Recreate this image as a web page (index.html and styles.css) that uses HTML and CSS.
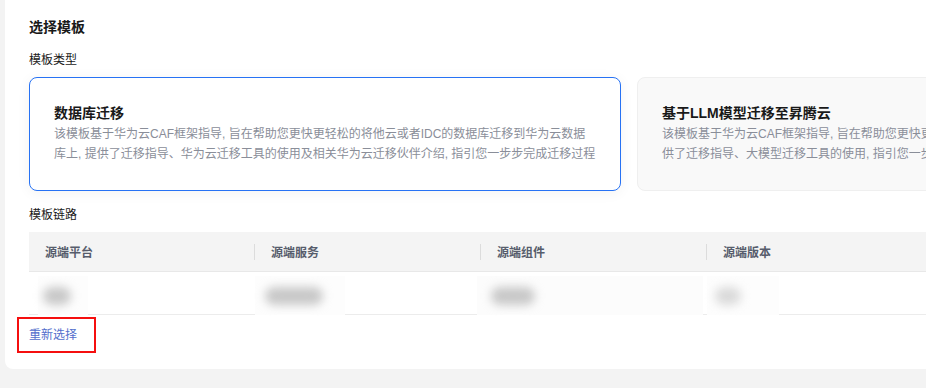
FILE: index.html
```html
<!DOCTYPE html>
<html lang="zh-CN">
<head>
<meta charset="utf-8">
<title>选择模板</title>
<link rel="stylesheet" href="styles.css">
</head>
<body>
<div class="page">
  <section class="panel">
    <h2 class="title">选择模板</h2>
    <div class="label">模板类型</div>
    <div class="cards">
      <div class="card card-active">
        <div class="card-title">数据库迁移</div>
        <div class="card-desc">该模板基于华为云CAF框架指导, 旨在帮助您更快更轻松的将他云或者IDC的数据库迁移到华为云数据<br>库上, 提供了迁移指导、华为云迁移工具的使用及相关华为云迁移伙伴介绍, 指引您一步步完成迁移过程</div>
      </div>
      <div class="card card-idle">
        <div class="card-title">基于LLM模型迁移至昇腾云</div>
        <div class="card-desc">该模板基于华为云CAF框架指导, 旨在帮助您更快更轻松的将LLM大模型迁移至昇腾云上, 提<br>供了迁移指导、大模型迁移工具的使用, 指引您一步步完成迁移过程</div>
      </div>
    </div>
    <div class="label label-chain">模板链路</div>
    <div class="table">
      <div class="thead">
        <div class="th first">源端平台</div>
        <div class="th">源端服务</div>
        <div class="th">源端组件</div>
        <div class="th">源端版本</div>
        <div class="th"></div>
      </div>
      <div class="trow">
        <div class="td"><div class="mask m1"><span class="blob b1"></span></div></div>
        <div class="td"><div class="mask m2"><span class="blob b2"></span></div></div>
        <div class="td"><div class="mask m3"><span class="blob b3"></span></div></div>
        <div class="td"><div class="mask m4"><span class="blob b4"></span></div></div>
        <div class="td"></div>
      </div>
    </div>
    <div class="actions">
      <a class="reselect" href="#">重新选择</a>
    </div>
  </section>
</div>
</body>
</html>
```

FILE: styles.css
```css
* { box-sizing: border-box; }
html, body {
  margin: 0;
  padding: 0;
  background: #f3f3f3;
  overflow: hidden;
  font-family: "Liberation Sans", "Noto Sans CJK SC", sans-serif;
  color: #191919;
}
.page {
  padding: 0 0 0 5px;
  width: 1400px;
}
.panel {
  background: #fff;
  border-radius: 0 0 8px 8px;
  padding: 16px 24px 18px 24px;
  width: 1300px;
}
.title {
  margin: 0;
  font-size: 14px;
  line-height: 22px;
  font-weight: 700;
}
.label {
  margin-top: 12px;
  font-size: 12px;
  line-height: 20px;
}
.label-chain { margin-top: 14px; }
.cards {
  display: flex;
  gap: 16px;
  margin-top: 7px;
}
.card {
  width: 592px;
  flex: none;
  border-radius: 8px;
  padding: 24px 24px 26px 24px;
  border: 1px solid #ececec;
}
.card-active {
  border-color: #2772f4;
  background: #fff;
  box-shadow: 0 2px 14px rgba(0,0,0,0.05);
}
.card-idle {
  background: #f9f9f9;
  border-color: #efefef;
}
.card-title {
  font-size: 14px;
  line-height: 22px;
  font-weight: 700;
  color: #191919;
}
.card-desc {
  font-size: 12px;
  line-height: 20px;
  color: #8a8e99;
  white-space: nowrap;
}
.table {
  margin-top: 7px;
}
.thead {
  display: flex;
  background: #f4f4f4;
  height: 40px;
  border-bottom: 1px solid #e8e8e8;
}
.th {
  width: 226px;
  flex: none;
  display: flex;
  align-items: center;
  font-size: 12px;
  font-weight: 700;
  color: #575d6c;
}
.th::before {
  content: "";
  width: 1px;
  height: 16px;
  background: #dcdcdc;
  margin-left: -1px;
  margin-right: 16px;
}
.th.first::before {
  width: 0;
  margin-left: 0;
}
.trow {
  display: flex;
  height: 43px;
  border-bottom: 1px solid #ececec;
}
.td {
  width: 226px;
  flex: none;
  padding-top: 4px;
}
.mask {
  height: 39px;
  margin-bottom: -1px;
  background: #fdfdfd;
  display: flex;
  align-items: center;
}
.m1 { width: 50px; margin-left: 9px; }
.m2 { width: 90px; margin-left: 0; }
.m3 { width: 226px; margin-left: -4px; background: #fcfcfc; }
.m4 { width: 72px; margin-left: 0; }
.blob {
  display: block;
  height: 18px;
  border-radius: 9px;
  background: #c8c8c8;
  filter: blur(5px);
}
.b1 { width: 28px; margin-left: 5px; }
.b2 { width: 58px; margin-left: 10px; }
.b3 { width: 44px; margin-left: 14px; }
.b4 { width: 26px; margin-left: 8px; background: #dadada; }
.actions {
  margin-top: 4px;
}
.reselect {
  display: inline-block;
  font-size: 12px;
  line-height: 20px;
  color: #526ecc;
  text-decoration: none;
  outline: 2px solid #f50f0f;
  outline-offset: 0;
  padding: 6px 17px 6px 10px;
  margin-left: -10px;
}
```
